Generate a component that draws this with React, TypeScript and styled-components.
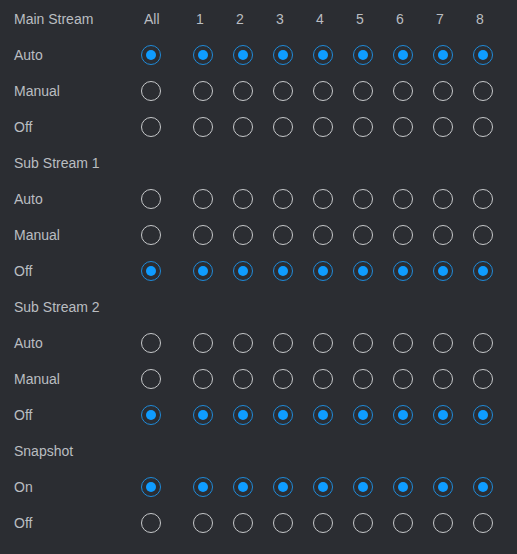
import * as React from 'react';
import styled, { createGlobalStyle } from 'styled-components';

const GlobalStyle = createGlobalStyle`
  html, body {
    margin: 0;
    padding: 0;
    background: #2b2d32;
  }

  body {
    font-family: "Liberation Sans", Arial, sans-serif;
    font-size: 14px;
    color: #babdc1;
  }
`;

const Panel = styled.div`
  width: 517px;
  min-height: 554px;
  padding-top: 1px;
  box-sizing: border-box;
  background: #2b2d32;
`;

const Row = styled.div`
  display: grid;
  grid-template-columns: 141px 52px repeat(8, 40px);
  height: 36px;
  align-items: center;
`;

const Label = styled.div`
  padding-left: 14px;
  line-height: 36px;
  white-space: nowrap;
`;

const ColHead = styled.div`
  padding-left: 3px;
  line-height: 36px;
`;

const Cell = styled.div`
  display: flex;
  align-items: center;
  height: 36px;
`;

const Radio = styled.span<{ $checked: boolean }>`
  position: relative;
  width: 20px;
  height: 20px;
  box-sizing: border-box;
  border-radius: 50%;
  border: 1.5px solid ${p => (p.$checked ? '#1f8ad8' : '#c6c8ca')};
  cursor: pointer;

  &::after {
    content: '';
    display: ${p => (p.$checked ? 'block' : 'none')};
    position: absolute;
    left: 50%;
    top: 50%;
    width: 10px;
    height: 10px;
    margin: -5px 0 0 -5px;
    border-radius: 50%;
    background: #0f9cff;
  }
`;

type Section = {
  title: string;
  options: string[];
  selected: string;
};

const sections: Section[] = [
  { title: 'Main Stream', options: ['Auto', 'Manual', 'Off'], selected: 'Auto' },
  { title: 'Sub Stream 1', options: ['Auto', 'Manual', 'Off'], selected: 'Off' },
  { title: 'Sub Stream 2', options: ['Auto', 'Manual', 'Off'], selected: 'Off' },
  { title: 'Snapshot', options: ['On', 'Off'], selected: 'On' },
];

const columns = ['All', '1', '2', '3', '4', '5', '6', '7', '8'];

export default function App() {
  const [values, setValues] = React.useState<string[][]>(
    sections.map(s => columns.map(() => s.selected))
  );

  // "All" sets every channel; a single channel keeps "All" in sync
  const pick = (si: number, ci: number, opt: string) => {
    setValues(prev =>
      prev.map((row, i) => {
        if (i !== si) return row;
        if (ci === 0) return row.map(() => opt);
        const next = row.slice();
        next[ci] = opt;
        next[0] = next.slice(1).every(v => v === opt) ? opt : '';
        return next;
      })
    );
  };

  return (
    <Panel>
      <GlobalStyle />
      {sections.map((s, si) => (
        <React.Fragment key={s.title}>
          <Row>
            <Label>{s.title}</Label>
            {si === 0 && columns.map(c => <ColHead key={c}>{c}</ColHead>)}
          </Row>
          {s.options.map(opt => (
            <Row key={opt}>
              <Label>{opt}</Label>
              {columns.map((c, ci) => (
                <Cell key={c}>
                  <Radio
                    $checked={values[si][ci] === opt}
                    onClick={() => pick(si, ci, opt)}
                  />
                </Cell>
              ))}
            </Row>
          ))}
        </React.Fragment>
      ))}
    </Panel>
  );
}
